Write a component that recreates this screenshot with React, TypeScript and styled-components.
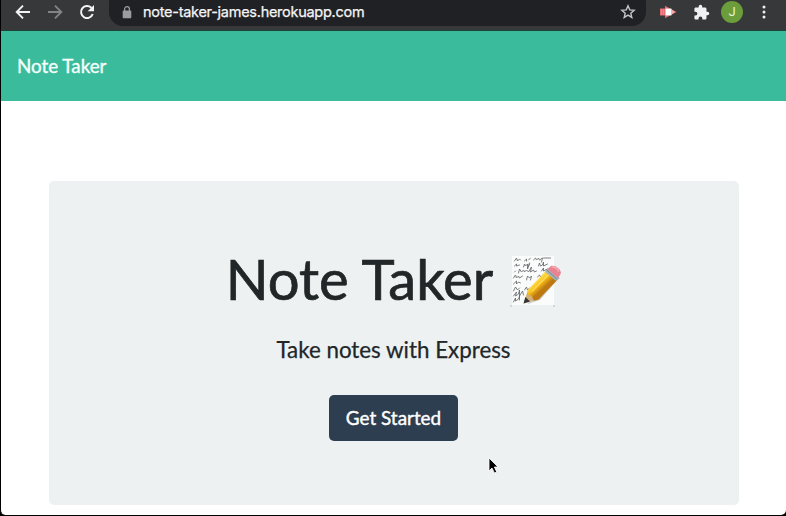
import React from "react";
import styled, { createGlobalStyle } from "styled-components";

const GlobalStyle = createGlobalStyle`
  *, *::before, *::after { box-sizing: border-box; }
  body { margin: 0; background: #000; overflow: hidden; }
`;

const Window = styled.div`
  position: relative;
  display: flex;
  flex-direction: column;
  width: 786px;
  height: 515px;
  border-left: 1px solid #000;
  border-radius: 0 0 5px 5px;
  overflow: hidden;
  background: #fff;
  color: #212628;
  font-family: Lato, sans-serif;
`;

const BrowserBar = styled.header`
  display: flex;
  flex: none;
  height: 31px;
  background: #37383a;
  border-bottom: 1px solid #1d4439;
`;

const BarGroup = styled.div<{ $width: number }>`
  display: flex;
  flex: none;
  width: ${(p) => p.$width}px;
  height: 24px;
  align-items: center;
`;

const IconButton = styled.button<{ $width: number }>`
  display: flex;
  justify-content: center;
  align-items: center;
  width: ${(p) => p.$width}px;
  height: 24px;
  padding: 0;
  border: 0;
  background: none;
`;

const AddressBar = styled.div`
  display: flex;
  flex: none;
  align-items: center;
  width: 537px;
  height: 26px;
  padding: 0 10px 2px 13px;
  border-radius: 0 0 14px 14px;
  background: #202124;
`;

const Url = styled.span`
  flex: 1;
  margin-left: 11px;
  color: #f4f5f6;
  font: 400 14.5px/20px Inter, sans-serif;
  letter-spacing: -0.27px;
  -webkit-text-stroke: 0.25px #f4f5f6;
  white-space: nowrap;
`;

const Avatar = styled.span`
  display: flex;
  flex: none;
  justify-content: center;
  align-items: center;
  width: 22px;
  height: 22px;
  margin: 0 9px 0 10px;
  border-radius: 50%;
  background: #6b9d3a;
  color: #e9f1df;
  font: 400 13px/22px Roboto, sans-serif;
`;

const Navbar = styled.nav`
  display: flex;
  flex: none;
  align-items: center;
  height: 70px;
  padding: 0 16px;
  background: #3abc9c;
`;

const Brand = styled.a`
  color: #f6fffc;
  font-size: 18.8px;
  line-height: 28px;
  -webkit-text-stroke: 0.35px #f6fffc;
`;

const Hero = styled.main`
  display: flex;
  flex: none;
  flex-direction: column;
  align-items: center;
  width: 690px;
  height: 324px;
  margin: 80px 0 0 48px;
  padding: 64px 1px 0 0;
  border-radius: 5px;
  background: #edf1f2;
`;

const Title = styled.h1`
  display: flex;
  align-items: center;
  gap: 14px;
  margin: 0;
  font-size: 56.2px;
  font-weight: 400;
  line-height: 68px;
  -webkit-text-stroke: 0.7px #212628;
  white-space: nowrap;

  svg { margin-top: 3px; }
`;

const Lead = styled.p`
  margin: 23px 0 0;
  font-size: 22.35px;
  line-height: 28px;
  -webkit-text-stroke: 0.25px #212628;
`;

const StartButton = styled.a`
  display: flex;
  justify-content: center;
  align-items: center;
  width: 129px;
  height: 46px;
  margin: 31px 1px 0 0;
  padding: 0 0 1px 1px;
  border-radius: 5px;
  background: #2d3e50;
  color: #fff;
  font-size: 18.9px;
  -webkit-text-stroke: 0.4px #fff;
`;

const Cursor = styled.svg`
  position: absolute;
  left: 486px;
  top: 457px;
`;

const BackIcon = () => (
  <svg width="16" height="16" viewBox="0 0 16 16" fill="none" stroke="#f1f3f4" strokeWidth="1.9">
    <path d="M15 8H2M8 1.7 1.7 8 8 14.3" />
  </svg>
);

const ForwardIcon = () => (
  <svg width="16" height="16" viewBox="0 0 16 16" fill="none" stroke="#828386" strokeWidth="1.9">
    <path d="M1 8h13M8 1.7 14.3 8 8 14.3" />
  </svg>
);

const ReloadIcon = () => (
  <svg width="16" height="16" viewBox="0 0 16 16">
    <path d="M13.7 10a6 6 0 1 1-1.400-6.200L14 5.500" fill="none" stroke="#f1f3f4" strokeWidth="2" />
    <path d="M15 1v6.3H8.7z" fill="#f1f3f4" />
  </svg>
);

const LockIcon = () => (
  <svg width="10" height="13" viewBox="0 0 10 13">
    <rect x="0.7" y="4.5" width="8.6" height="7.7" rx="1" fill="#9b9ca0" />
    <path d="M2.6 5V3.1a2.4 2.4 0 0 1 4.8 0V5" fill="none" stroke="#9b9ca0" strokeWidth="1.3" />
  </svg>
);

const StarIcon = () => (
  <svg width="16" height="16" viewBox="0 0 16 16">
    <path
      d="m8 1.8 1.75 4.05 4.4.4-3.35 2.9 1 4.3L8 11.15l-3.8 2.3 1-4.3-3.35-2.9 4.4-.4z"
      fill="none"
      stroke="#c2c4c8"
      strokeWidth="1.4"
    />
  </svg>
);

const ArrowExtensionIcon = () => (
  <svg width="17" height="14" viewBox="0 0 17 14">
    <path d="M0 3.5h5V0.8L16.5 7 5 13.2v-2.700H0z" fill="#e66b70" />
    <path d="M5.500 3.6h6v6.8h-6z" fill="#fff" />
    <path d="M11.500 4.5 15 7l-3.500 2.500z" fill="#f3b0b1" />
    <path d="M1.4 4v6M3.4 4v6" stroke="#f19b9e" strokeWidth="0.6" />
  </svg>
);

const PuzzleIcon = () => (
  <svg width="17" height="17" viewBox="0 0 24 24" fill="#f0f2f4">
    <path d="M20.5 11H19V7c0-1.100-.9-2-2-2h-4V3.500a2.500 2.500 0 0 0-5 0V5H4c-1.100 0-2 .9-2 2v3.800h1.500a2.700 2.700 0 0 1 0 5.400H2V20c0 1.100.9 2 2 2h3.800v-1.500a2.700 2.700 0 0 1 5.400 0V22H17c1.100 0 2-.9 2-2v-4h1.500a2.500 2.500 0 0 0 0-5z" />
  </svg>
);

const MenuIcon = () => (
  <svg width="4" height="14" viewBox="0 0 4 14" fill="#eef0f2">
    <circle cx="2" cy="2" r="1.5" />
    <circle cx="2" cy="7" r="1.5" />
    <circle cx="2" cy="12" r="1.5" />
  </svg>
);

const MemoIcon = () => (
  <svg width="54" height="56" viewBox="0 0 54 56">
    <defs>
      <linearGradient id="pencilBody" x1="23" y1="24" x2="34" y2="36" gradientUnits="userSpaceOnUse">
        <stop offset="0" stopColor="#e3a922" />
        <stop offset="0.35" stopColor="#ffdc42" />
        <stop offset="0.65" stopColor="#f6b91a" />
        <stop offset="1" stopColor="#bd7910" />
      </linearGradient>
    </defs>
    <path d="M5 3h42v49H5z" fill="#fafbfb" />
    <g transform="translate(1.500 0)" fill="none" stroke="#66686a" strokeWidth="0.85" strokeLinecap="round">
      <path d="m6 8 2-3 1 3 2-2 1 1M16 8l2-2 0 2M20 7l2-2M25 7l2-2 1 2 2-2 1 2 3-2-1 4M35 5h7" />
      <path d="m6 13 2-2 0 2 3-1M15 14l1-3 1 2 2-2 0 5 2-5M21 10l-1 3M30 13l1-3 1 3 2-1 1-3 0 4 4-2" />
      <path d="m6 19 1-1M10 20l1-4 2 3 2-2 1 2 2-2 2 2 3-5-1 5 3-2 1 2 2-1M33 18l2-3 0 3 4-2" />
      <path d="m5 25 2-3 1 3 2-2 1 2 3-2M18 27l1-4 2 2 2-2-1 4M29 24l2-2 1 2 5-2" />
      <path d="m5 31 3-3 0 3 2-2 2 1M5 38l2-4 2 3 2-2M16 37l2-3 1 3 2-2" />
      <path d="m5 43 3-4-1 4 3-2 1-4 0 6 3-5 1 4M5 49l2-4 0 3 3-2 1-3 0 4" />
    </g>
    <path d="M3 53h2M46 53h2" stroke="#b9bdbe" />
    <g transform="translate(3.500 3) scale(.93)">
      <path d="m18 52 14-5 19-22 2-9-6 1-25 29z" fill="#666" opacity="0.3" />
      <path d="m14 51 5-15 11 10z" fill="#d3ae78" />
      <path d="M18 37 39 15l12 10-21 22-5 1-2-5-4-1z" fill="url(#pencilBody)" />
      <path d="m23 38 19-19" stroke="#fff178" strokeWidth="1.3" opacity="0.7" />
      <path d="m14 51 2-7 5 5z" fill="#353535" />
      <path d="m37 17 4-4 12 11-4 3z" fill="#a5b3bb" />
      <path d="m39 15 11 10" stroke="#748087" strokeWidth="1" />
      <path d="m40 14 3-3c4-2 12 3 11 8l-3 5z" fill="#e98291" />
      <path d="m44 12c4-1 7 2 8 5" fill="none" stroke="#f6acb3" strokeWidth="1.5" />
    </g>
  </svg>
);

export default function App() {
  return (
    <>
      <GlobalStyle />
      <Window>
        <BrowserBar>
          <BarGroup $width={108}>
            <IconButton $width={44} aria-label="Back"><BackIcon /></IconButton>
            <IconButton $width={20} aria-label="Forward"><ForwardIcon /></IconButton>
            <IconButton $width={44} aria-label="Reload"><ReloadIcon /></IconButton>
          </BarGroup>
          <AddressBar>
            <LockIcon />
            <Url>note-taker-james.herokuapp.com</Url>
            <StarIcon />
          </AddressBar>
          <BarGroup $width={140}>
            <IconButton $width={45} aria-label="Extension"><ArrowExtensionIcon /></IconButton>
            <IconButton $width={20} aria-label="Extensions"><PuzzleIcon /></IconButton>
            <Avatar>J</Avatar>
            <IconButton $width={24} aria-label="Menu"><MenuIcon /></IconButton>
          </BarGroup>
        </BrowserBar>
        <Navbar><Brand>Note Taker</Brand></Navbar>
        <Hero>
          <Title><span>Note Taker</span><MemoIcon /></Title>
          <Lead>Take notes with Express</Lead>
          <StartButton>Get Started</StartButton>
        </Hero>
        <Cursor width="12" height="19" viewBox="0 0 12 19">
          <path d="M2 1v13l3-3 2.400 5 2.300-1-2.300-5H11z" fill="#000" stroke="#fff" strokeWidth="0.8" />
        </Cursor>
      </Window>
    </>
  );
}
